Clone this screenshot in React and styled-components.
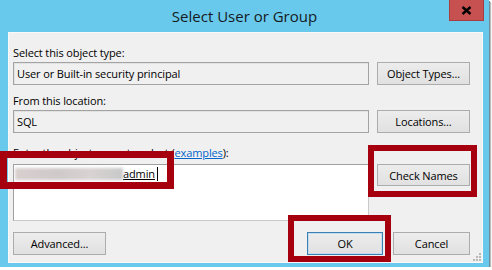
import styled, { createGlobalStyle } from 'styled-components';

const GlobalStyle = createGlobalStyle`
  body {
    margin: 0;
    background: #ffffff;
    font-family: "Open Sans", "Liberation Sans", sans-serif;
  }
`;

const Window = styled.div`
  position: relative;
  width: 489px;
  height: 267px;
  box-sizing: border-box;
  background: #69c9ec;
  box-shadow: 1px 1px 0 #6f8c99, 2px 2px 1px rgba(0, 0, 0, 0.25);
  display: flex;
  flex-direction: column;
`;

const TitleBar = styled.div`
  height: 32px;
  display: grid;
  grid-template-columns: 40px 1fr 40px;
`;

const Title = styled.div`
  grid-column: 2;
  text-align: center;
  font-size: 15px;
  line-height: 32px;
  color: #161a1d;
`;

const CloseButton = styled.div`
  width: 35px;
  height: 21px;
  box-sizing: border-box;
  background: #c75050;
  border: 1px solid #a64040;
  border-top: none;
  display: flex;
  align-items: center;
  justify-content: center;
`;

const Client = styled.div`
  flex: 1;
  margin: 0 6px 4px 8px;
  background: #f0f0f0;
  border: 1px solid #f9f9f9;
  padding: 13px 12px 7px 4px;
  display: flex;
  flex-direction: column;
  font-size: 11px;
  letter-spacing: -0.12px;
  color: #000;
`;

const Label = styled.div`
  line-height: 13px;
  height: 13px;
  margin-top: ${p => p.$gap || 0}px;
  white-space: nowrap;
`;

const Row = styled.div`
  display: grid;
  grid-template-columns: 356px 93px;
  column-gap: 8px;
  align-items: start;
  margin-top: ${p => p.$gap || 0}px;
`;

const Field = styled.div`
  height: 23px;
  box-sizing: border-box;
  border: 1px solid #a3a3a3;
  box-shadow: inset 1px 1px 0 #e2e2e2;
  background: #f0f0f0;
  padding: 0 3px;
  line-height: 21px;
  white-space: nowrap;
`;

const NameBox = styled.div`
  height: 57px;
  box-sizing: border-box;
  background: #fff;
  border: 1px solid #c9c9c9;
  border-left-color: #a0a0a0;
  border-top-color: #a0a0a0;
  padding: 2px 1px;
  display: flex;
  align-items: flex-start;
`;

const Blurred = styled.span`
  width: 108px;
  height: 12px;
  margin-top: 1px;
  background: linear-gradient(90deg, #d9cfcf, #cfc9c9 40%, #d8d2d2 70%, #c8c8c8);
  filter: blur(1.5px);
`;

const Typed = styled.span`
  line-height: 14px;
  text-decoration: underline;
  padding-right: 2px;
  border-right: 1px solid #000;
`;

const Button = styled.div`
  height: ${p => p.$h || 23}px;
  width: ${p => (p.$w ? `${p.$w}px` : 'auto')};
  box-sizing: border-box;
  background: linear-gradient(#ececec, #e1e1e1);
  border: 1px solid ${p => (p.$default ? '#3c7fb1' : '#acacac')};
  box-shadow: ${p => (p.$default ? 'inset 0 0 0 1px #c4dcef' : 'none')};
  display: flex;
  align-items: center;
  justify-content: center;
  white-space: nowrap;
`;

const Link = styled.span`
  color: #0066cc;
  text-decoration: underline;
`;

const Footer = styled.div`
  display: flex;
  align-items: center;
  margin-top: 11px;
  gap: 10px;
`;

const Spacer = styled.div`
  flex: 1;
`;

const Grip = styled.svg`
  position: absolute;
  right: 8px;
  bottom: 6px;
`;

const Callout = styled.div`
  position: absolute;
  left: ${p => p.$x}px;
  top: ${p => p.$y}px;
  width: ${p => p.$w}px;
  height: ${p => p.$h}px;
  box-sizing: border-box;
  border: ${p => p.$t || 6}px solid #a6000f;
  pointer-events: none;
`;

export default function App() {
  return (
    <>
      <GlobalStyle />
      <Window>
        <TitleBar>
          <Title>Select User or Group</Title>
          <CloseButton>
            <svg width="11" height="9" viewBox="0 0 11 9">
              <path d="M1.5 1 L9.5 8 M9.5 1 L1.5 8" stroke="#000" strokeWidth="2.4" />
            </svg>
          </CloseButton>
        </TitleBar>
        <Client>
          <Label>Select this object type:</Label>
          <Row $gap={3}>
            <Field>User or Built-in security principal</Field>
            <Button>Object Types...</Button>
          </Row>
          <Label $gap={9}>From this location:</Label>
          <Row $gap={3}>
            <Field>SQL</Field>
            <Button>Locations...</Button>
          </Row>
          <Label $gap={13}>
            Enter the object name to select (<Link>examples</Link>):
          </Label>
          <Row $gap={5}>
            <NameBox>
              <Blurred />
              <Typed>admin</Typed>
            </NameBox>
            <Button $h={22}>Check Names</Button>
          </Row>
          <Footer>
            <Button $w={93}>Advanced...</Button>
            <Spacer />
            <Button $w={76} $default>OK</Button>
            <Button $w={77}>Cancel</Button>
          </Footer>
        </Client>
        <Grip width="8" height="8" viewBox="0 0 8 8">
          <rect x="6" y="0" width="2" height="2" fill="#b9b9b9" />
          <rect x="3" y="3" width="2" height="2" fill="#b9b9b9" />
          <rect x="6" y="3" width="2" height="2" fill="#b9b9b9" />
          <rect x="0" y="6" width="2" height="2" fill="#b9b9b9" />
          <rect x="3" y="6" width="2" height="2" fill="#b9b9b9" />
          <rect x="6" y="6" width="2" height="2" fill="#b9b9b9" />
        </Grip>
        <Callout $x={0} $y={151} $w={174} $h={38} $t={7} />
        <Callout $x={368} $y={145} $w={109} $h={52} />
        <Callout $x={288} $y={215} $w={103} $h={47} />
      </Window>
    </>
  );
}
